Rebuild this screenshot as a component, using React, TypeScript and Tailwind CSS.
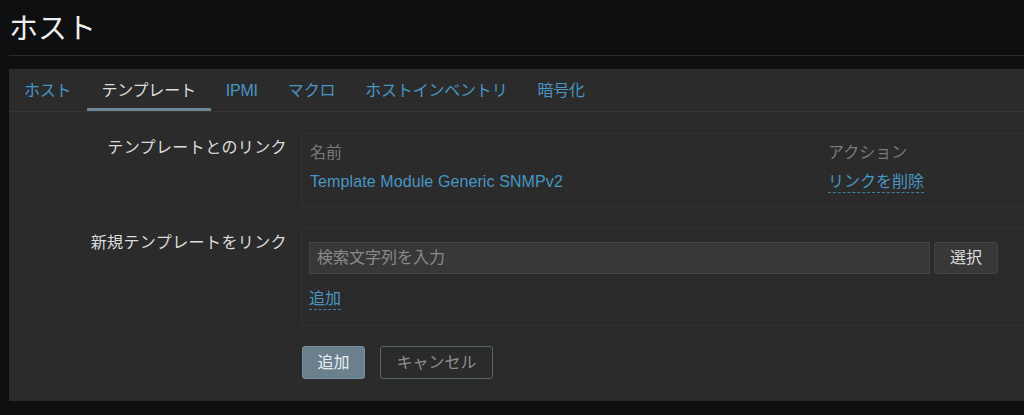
import React from "react";

const jp = { fontFamily: '"Liberation Sans", "Noto Sans CJK JP", sans-serif' };

export default function App() {
  const tabs = ["ホスト", "テンプレート", "IPMI", "マクロ", "ホストインベントリ", "暗号化"];
  return (
    <div className="w-[1024px] h-[415px] overflow-hidden bg-[#0e0f11] pl-[9px]" style={jp}>
      <div className="h-[56px] flex items-center border-b border-[#2c2c2e] pl-[0px] pt-[3px]">
        <h1 className="text-[29px] leading-[40px] text-[#eeeeee] font-normal">ホスト</h1>
      </div>
      <div className="mt-[13px] w-[1100px] bg-[#2b2b2b] border-t border-[#303030] pb-[22px]">
        <div className="flex h-[42px] border-b border-[#353535]">
          {tabs.map((t, i) => (
            <div
              key={t}
              className={
                "relative h-[41px] px-[15px] flex items-center text-[16px] tracking-[-0.2px] " +
                (i === 1 ? "text-[#dedede]" : "text-[#4796c4]")
              }
            >
              {t}
              {i === 1 && <div className="absolute left-[1px] right-[0px] bottom-0 h-[3px] bg-[#6d8797]" />}
            </div>
          ))}
        </div>

        <div className="flex mt-[21px]">
          <div className="w-[278px] text-right text-[16px] leading-[22px] pt-[4px] text-[#dcdcdc] tracking-[0.4px]">
            テンプレートとのリンク
          </div>
          <div className="ml-[14px] w-[760px] border border-[#323232] pl-[8px] pt-[7px] pb-[12px]">
            <div className="flex h-[24px] items-center text-[16px] text-[#7a7a7a]">
              <div className="w-[518px]">名前</div>
              <div>アクション</div>
            </div>
            <div className="flex h-[24px] items-center mt-[5px] text-[16px]">
              <div className="w-[518px] text-[#4796c4] tracking-[0.1px]">Template Module Generic SNMPv2</div>
              <div className="text-[#4796c4] border-b border-dashed border-[#3f7ea6] leading-[20px]">リンクを削除</div>
            </div>
          </div>
        </div>

        <div className="flex mt-[21px]">
          <div className="w-[278px] text-right text-[16px] leading-[22px] pt-[4px] text-[#dcdcdc] tracking-[0.4px]">
            新規テンプレートをリンク
          </div>
          <div className="ml-[14px] w-[760px] border border-[#323232] pl-[7px] pt-[13px] pb-[15px]">
            <div className="flex items-center">
              <div className="w-[621px] h-[32px] bg-[#383838] border border-[#444444] flex items-center pl-[7px] text-[16px] text-[#8a8a8a]">
                検索文字列を入力
              </div>
              <div className="ml-[4px] w-[64px] h-[32px] bg-[#383838] border border-[#444444] rounded-[3px] flex items-center justify-center text-[16px] text-[#dcdcdc]">
                選択
              </div>
            </div>
            <div className="mt-[14px] flex">
              <span className="text-[16px] leading-[21px] text-[#4796c4] border-b border-dashed border-[#3f7ea6]">追加</span>
            </div>
          </div>
        </div>

        <div className="flex mt-[20px] ml-[293px] gap-[15px]">
          <div className="w-[63px] h-[33px] rounded-[3px] bg-[#6a808d] border border-[#7890a0] flex items-center justify-center text-[16px] text-[#e8eef2]">
            追加
          </div>
          <div className="w-[113px] h-[33px] rounded-[3px] border border-[#56666f] flex items-center justify-center text-[16px] text-[#8a9095]">
            キャンセル
          </div>
        </div>
      </div>
    </div>
  );
}
